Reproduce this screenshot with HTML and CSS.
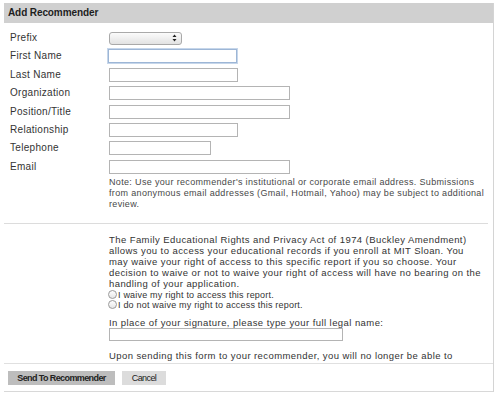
FILE: index.html
```html
<!DOCTYPE html>
<html>
<head>
<meta charset="utf-8">
<link rel="stylesheet" href="styles.css">
</head>
<body>
<div class="dialog">
  <div class="header">Add Recommender</div>
  <div class="content">
    <div class="form">
      <span class="label">Prefix</span>
      <div class="select"><svg width="5" height="8" viewBox="0 0 5 8"><path d="M2.5 0.5 L4.5 3 L0.5 3 Z M2.5 7.5 L4.5 5 L0.5 5 Z" fill="#222"/></svg></div>
      <span class="label">First Name</span>
      <div class="input w-md focused"></div>
      <span class="label">Last Name</span>
      <div class="input w-md"></div>
      <span class="label">Organization</span>
      <div class="input w-lg"></div>
      <span class="label">Position/Title</span>
      <div class="input w-lg"></div>
      <span class="label">Relationship</span>
      <div class="input w-md"></div>
      <span class="label">Telephone</span>
      <div class="input w-sm"></div>
      <span class="label">Email</span>
      <div class="input w-lg"></div>
    </div>
    <p class="note">Note: Use your recommender's institutional or corporate email address. Submissions<br>from anonymous email addresses (Gmail, Hotmail, Yahoo) may be subject to additional<br>review.</p>
    <div class="divider"></div>
    <div class="ferpa">
      <p class="para">The Family Educational Rights and Privacy Act of 1974 (Buckley Amendment)<br>allows you to access your educational records if you enroll at MIT Sloan. You<br>may waive your right of access to this specific report if you so choose. Your<br>decision to waive or not to waive your right of access will have no bearing on the<br>handling of your application.</p>
      <div class="radios">
        <div class="radio-row"><span class="radio"></span>I waive my right to access this report.</div>
        <div class="radio-row"><span class="radio"></span>I do not waive my right to access this report.</div>
      </div>
      <p class="sig-label">In place of your signature, please type your full legal name:</p>
      <div class="input w-sig"></div>
      <p class="para upon">Upon sending this form to your recommender, you will no longer be able to<br>change or edit the information that you have entered for this recommender.</p>
    </div>
  </div>
  <div class="footer">
    <button class="btn btn-primary">Send To Recommender</button>
    <button class="btn btn-secondary">Cancel</button>
  </div>
</div>
</body>
</html>
```

FILE: styles.css
```css
html, body {
  margin: 0;
  padding: 0;
  background: #ffffff;
}

body {
  font-family: "Liberation Sans", Arial, sans-serif;
  color: #333333;
}

.dialog {
  margin: 3px 0 0 4px;
  width: 489px;
  border-right: 1px solid #d4d4d4;
}

.header {
  height: 20px;
  line-height: 20px;
  background: #d0d0d0;
  padding-left: 4px;
  font-size: 10px;
  font-weight: bold;
  color: #1e1e1e;
  letter-spacing: -0.1px;
}

.content {
  height: 340px;
  overflow: hidden;
}

.form {
  display: grid;
  grid-template-columns: 105px auto;
  grid-auto-rows: 14px;
  row-gap: 4.4px;
  padding-top: 8px;
  align-items: center;
}

.label {
  padding-left: 6px;
  font-size: 10px;
  letter-spacing: 0.3px;
  color: #333333;
  line-height: 14px;
}

.input {
  box-sizing: border-box;
  height: 14px;
  border: 1px solid #b4b4b4;
  background: #ffffff;
}

.w-sm { width: 102px; }
.w-md { width: 129px; }
.w-lg { width: 181px; }
.w-sig { width: 234px; height: 13px; }

.focused {
  border-color: #9db6d6;
  box-shadow: 0 0 0 1px #c6d6ea;
  margin-left: -1px;
}

.select {
  box-sizing: border-box;
  width: 73px;
  height: 13px;
  border: 1px solid #a9a9a9;
  border-radius: 3px;
  background: linear-gradient(#fbfbfb, #e2e2e2);
  display: flex;
  align-items: center;
  justify-content: flex-end;
  padding-right: 4px;
}

.note {
  margin: 3px 0 0 105px;
  font-size: 9px;
  line-height: 11px;
  letter-spacing: 0.34px;
  color: #484848;
  white-space: nowrap;
}

.divider {
  margin-top: 13px;
  width: 484px;
  height: 1px;
  background: #dcdcdc;
}

.ferpa {
  padding-left: 105px;
  padding-top: 10px;
}

.para {
  margin: 0;
  font-size: 9.5px;
  line-height: 11px;
  letter-spacing: 0.42px;
  color: #333333;
  white-space: nowrap;
}

.radios {
  margin-top: 1px;
}

.radio-row {
  display: flex;
  align-items: center;
  height: 10px;
  font-size: 9px;
  letter-spacing: 0.2px;
  color: #333333;
}

.radio {
  box-sizing: border-box;
  width: 9px;
  height: 9px;
  border: 1px solid #9a9a9a;
  border-radius: 50%;
  background: linear-gradient(#ffffff, #e6e6e6);
  margin-right: 1px;
  margin-left: -1px;
}

.sig-label {
  margin: 7px 0 0;
  font-size: 9.5px;
  line-height: 11px;
  letter-spacing: 0.43px;
  color: #333333;
}

.upon {
  margin-top: 9px;
}

.footer {
  border-top: 1px solid #e0e0e0;
  border-bottom: 1px solid #d8d8d8;
  padding: 7px 4px 6px;
  display: flex;
  gap: 7px;
}

.btn {
  height: 14px;
  border: none;
  padding: 0;
  font-family: "Liberation Sans", Arial, sans-serif;
  font-size: 9px;
  letter-spacing: -0.6px;
  color: #222222;
  line-height: 14px;
}

.btn-primary {
  width: 107px;
  background: #bdbdbd;
  font-weight: bold;
}

.btn-secondary {
  width: 44px;
  background: #dcdcdc;
}
```
